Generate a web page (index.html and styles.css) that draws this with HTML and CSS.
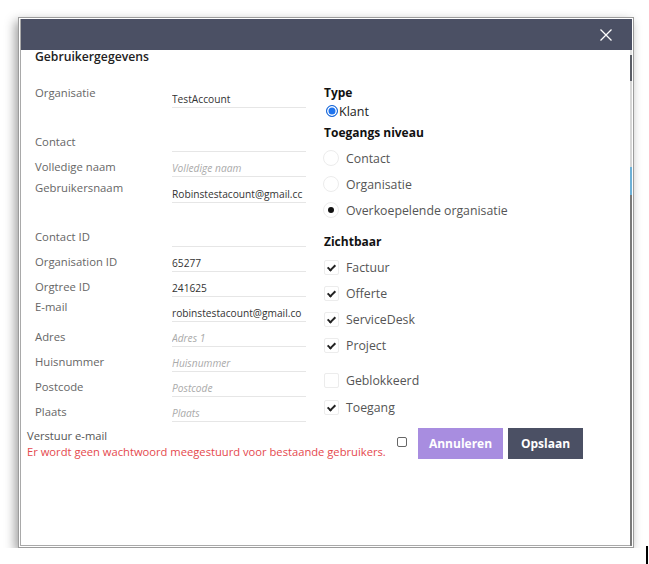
FILE: index.html
```html
<!DOCTYPE html>
<html lang="nl">
<head>
    <meta charset="UTF-8">
    <meta name="viewport" content="width=device-width, initial-scale=1.0">
    <title>Gebruikergegevens</title>
    <link rel="stylesheet" href="styles.css">
</head>
<body>
    <div class="venster">
        <div class="dialoog">
            <div class="modal">
                <div class="kop">
                    <button class="sluiten" aria-label="Sluiten">
                        <svg width="12" height="12" viewBox="0 0 12 12">
                            <path d="M0.5 0.5 L11.5 11.5 M11.5 0.5 L0.5 11.5" stroke="#fff" stroke-width="1.3" fill="none"/>
                        </svg>
                    </button>
                </div>

                <div class="inhoud">
                    <h2 class="titel">Gebruikergegevens</h2>

                    <div class="kolommen">
                        <div class="velden">
                            <div class="rij hoog">
                                <label>Organisatie</label>
                                <input type="text" value="TestAccount">
                            </div>
                            <div class="rij ruimte">
                                <label>Contact</label>
                                <input type="text" value="">
                            </div>
                            <div class="rij">
                                <label>Volledige naam</label>
                                <input type="text" placeholder="Volledige naam">
                            </div>
                            <div class="rij hoog extra">
                                <label>Gebruikersnaam</label>
                                <input type="text" value="Robinstestacount@gmail.cc">
                            </div>
                            <div class="rij ruimte">
                                <label>Contact ID</label>
                                <input type="text" value="">
                            </div>
                            <div class="rij">
                                <label>Organisation ID</label>
                                <input type="text" value="65277">
                            </div>
                            <div class="rij">
                                <label>Orgtree ID</label>
                                <input type="text" value="241625">
                            </div>
                            <div class="rij hoog">
                                <label>E-mail</label>
                                <input type="text" value="robinstestacount@gmail.co">
                            </div>
                            <div class="rij">
                                <label>Adres</label>
                                <input type="text" placeholder="Adres 1">
                            </div>
                            <div class="rij">
                                <label>Huisnummer</label>
                                <input type="text" placeholder="Huisnummer">
                            </div>
                            <div class="rij">
                                <label>Postcode</label>
                                <input type="text" placeholder="Postcode">
                            </div>
                            <div class="rij">
                                <label>Plaats</label>
                                <input type="text" placeholder="Plaats">
                            </div>
                        </div>

                        <div class="opties">
                            <div class="kopje">Type</div>
                            <div class="klant"><span class="radio-aan"></span>Klant</div>

                            <div class="kopje niveau">Toegangs niveau</div>
                            <div class="optie eerste"><span class="rondje"></span>Contact</div>
                            <div class="optie"><span class="rondje"></span>Organisatie</div>
                            <div class="optie"><span class="rondje gekozen"></span>Overkoepelende organisatie</div>

                            <div class="kopje zicht">Zichtbaar</div>
                            <div class="optie eerste"><span class="vinkje aan"></span>Factuur</div>
                            <div class="optie"><span class="vinkje aan"></span>Offerte</div>
                            <div class="optie"><span class="vinkje aan"></span>ServiceDesk</div>
                            <div class="optie"><span class="vinkje aan"></span>Project</div>

                            <div class="optie los"><span class="vinkje"></span>Geblokkeerd</div>
                            <div class="optie laatste"><span class="vinkje aan"></span>Toegang</div>
                        </div>
                    </div>

                    <div class="voet">
                        <div class="melding">
                            <div>Verstuur e-mail</div>
                            <div class="fout">Er wordt geen wachtwoord meegestuurd voor bestaande gebruikers.</div>
                        </div>
                        <span class="vakje"></span>
                        <div class="knoppen">
                            <button class="knop annuleren">Annuleren</button>
                            <button class="knop opslaan">Opslaan</button>
                        </div>
                    </div>
                </div>
            </div>
            <div class="rand"></div>
        </div>
    </div>
    <div class="cursor"></div>
</body>
</html>
```

FILE: styles.css
```css
:root {
    --kop: #4b5064;
    --paars: #a88de0;
    --lijn: #e6e6e6;
}

* {
    box-sizing: border-box;
}

body {
    margin: 0;
    padding: 17px 0 0 18px;
    background: #fff;
    font-family: 'Open Sans', 'Liberation Sans', sans-serif;
    color: #666;
}

.venster {
    width: 616px;
    height: 531px;
    border: 1px solid #9c9c9c;
    padding: 1px;
    background: #fff;
    box-shadow: -3px 4px 10px rgba(0,0,0,0.38);
}

.dialoog {
    display: flex;
    height: 100%;
}

.modal {
    flex: 1;
    border-left: 1px solid #a9a9a9;
    border-bottom: 1px solid #a9a9a9;
    background: #fff;
}

.rand {
    width: 2px;
    background: linear-gradient(to bottom,
        var(--kop) 0 31px,
        #e2e2e2 31px 36px,
        #5a5d66 36px 62px,
        #d6d6d6 62px 148px,
        #6db0d6 148px 176px,
        #7a7a7a 176px);
}

.kop {
    height: 31px;
    background: var(--kop);
    display: flex;
    justify-content: flex-end;
    align-items: center;
    padding-right: 18px;
}

.sluiten {
    border: none;
    background: none;
    padding: 0;
    width: 12px;
    height: 12px;
    display: flex;
}

.inhoud {
    padding-left: 14px;
}

.titel {
    margin: 0;
    font-size: 12.2px;
    font-weight: 600;
    line-height: 14px;
    color: #222;
}

.kolommen {
    display: flex;
    margin-top: 19px;
}

.velden {
    width: 271px;
}

.rij {
    display: flex;
    height: 25px;
}

.rij.ruimte {
    margin-top: 19px;
}

.rij.extra {
    margin-top: 1px;
}

.rij label {
    width: 137px;
    font-size: 11.3px;
    line-height: 16px;
    align-self: flex-end;
    padding-bottom: 2px;
    color: #666;
}

.rij.hoog label {
    align-self: flex-start;
    padding-top: 2px;
    padding-bottom: 0;
}

.rij input {
    width: 134px;
    height: 25px;
    padding: 7px 0 0;
    border: none;
    border-bottom: 1px solid var(--lijn);
    background: transparent;
    font-family: 'Open Sans', 'Liberation Sans', sans-serif;
    font-size: 10.2px;
    line-height: 17px;
    color: #333;
    outline: none;
}

.rij input::placeholder {
    font-style: italic;
    color: #aaa;
}

.opties {
    margin-left: 18px;
    display: flex;
    flex-direction: column;
}

.kopje {
    font-size: 12px;
    font-weight: 700;
    line-height: 20px;
    color: #111;
}

.kopje.niveau {
    margin-top: 4px;
}

.kopje.zicht {
    margin-top: 9px;
}

.klant {
    display: flex;
    align-items: center;
    height: 16px;
    font-size: 12.5px;
    color: #222;
}

.radio-aan {
    width: 12px;
    height: 12px;
    margin: 0 1px 0 2px;
    border-radius: 50%;
    border: 1px solid #1766d6;
    background: #1e74ee;
    box-shadow: inset 0 0 0 1.5px #fff;
}

.optie {
    display: flex;
    align-items: center;
    height: 26px;
    font-size: 12.3px;
    color: #555;
}

.optie.eerste {
    margin-top: 2px;
}

.optie.los {
    margin-top: 9px;
}

.optie.laatste {
    margin-top: 1px;
}

.rondje {
    width: 16px;
    height: 16px;
    margin: 0 7px 0 -1px;
    border: 1px solid #ececec;
    border-radius: 50%;
    display: flex;
    align-items: center;
    justify-content: center;
}

.rondje.gekozen::after {
    content: "";
    width: 6px;
    height: 6px;
    border-radius: 50%;
    background: #111;
}

.vinkje {
    width: 15px;
    height: 15px;
    margin-right: 7px;
    border: 1px solid #ececec;
    border-radius: 2px;
    position: relative;
}

.vinkje.aan::after {
    content: "";
    position: absolute;
    left: 4px;
    top: 2px;
    width: 3px;
    height: 6px;
    border-right: 2px solid #222;
    border-bottom: 2px solid #222;
    transform: rotate(45deg);
}

.voet {
    display: flex;
    align-items: flex-start;
    margin: 6px 0 0 -8px;
}

.melding {
    flex: 0 0 370px;
    font-size: 11.2px;
    line-height: 16px;
    white-space: nowrap;
    color: #555;
}

.melding .fout {
    color: #e5484d;
}

.vakje {
    width: 10px;
    height: 10px;
    margin-top: 9px;
    border: 1px solid #666;
    border-radius: 2px;
}

.knoppen {
    display: flex;
    gap: 5px;
    margin-left: 11px;
}

.knop {
    height: 31px;
    padding: 0;
    border: none;
    color: #fff;
    font-family: 'Open Sans', 'Liberation Sans', sans-serif;
    font-size: 12px;
    font-weight: 700;
}

.annuleren {
    width: 85px;
    background: var(--paars);
}

.opslaan {
    width: 75px;
    background: var(--kop);
}

.cursor {
    position: absolute;
    left: 646px;
    top: 546px;
    width: 2px;
    height: 18px;
    background: #000;
}
```
